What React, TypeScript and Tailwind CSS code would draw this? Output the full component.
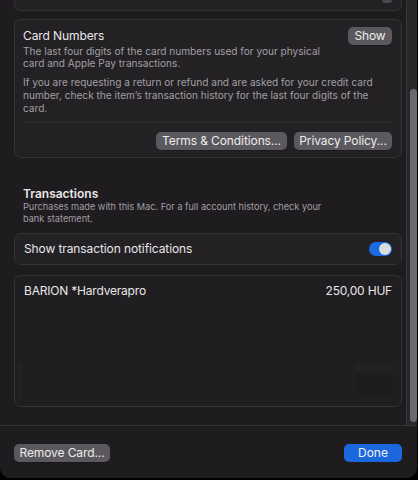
import React from "react";

const font = { fontFamily: "Inter, 'Noto Sans', 'Liberation Sans', sans-serif" };

function GrayButton({ children, className = "" }: { children: React.ReactNode; className?: string }) {
  return (
    <div
      className={
        "h-[18px] rounded-[5px] bg-[#5b595d] text-[#ececec] text-[12px] tracking-[-0.1px] leading-[18px] flex items-center justify-center whitespace-nowrap shadow-[0_0.5px_0_rgba(0,0,0,0.4)] " +
        className
      }
    >
      {children}
    </div>
  );
}

export default function App() {
  return (
    <div className="w-[418px] h-[480px] bg-black overflow-hidden" style={font}>
      <div className="w-[417px] h-[478px] bg-[#1f1c20] rounded-b-[10px] flex flex-col overflow-hidden">
        {/* scroll area */}
        <div className="h-[425px] flex flex-row">
          <div className="w-[406px] flex flex-col">
            {/* top card sliver */}
            <div className="ml-[14px] w-[388px] h-[11px] rounded-b-[7px] border border-t-0 border-[#353236] bg-[#242125] relative">
              <div className="absolute right-[9px] top-0 w-[10px] h-[3px] rounded-b-[3px] bg-[#4a484c]" />
            </div>
            {/* Card numbers card */}
            <div className="ml-[14px] mt-[8px] w-[388px] rounded-[7px] border border-[#353236] bg-[#242125] px-[8px] pt-[8px] pb-[7px]">
              <div className="flex flex-row justify-between">
                <div className="flex flex-col">
                  <div className="text-[12px] leading-[16px] text-[#e8e6e9] tracking-[-0.1px]">Card Numbers</div>
                  <div className="mt-[1px] text-[10.1px] leading-[12px] text-[#a19fa3] whitespace-nowrap">
                    The last four digits of the card numbers used for your physical
                    <br />
                    card and Apple Pay transactions.
                  </div>
                </div>
                <GrayButton className="w-[44px] -mt-[1px] mr-[1px]">Show</GrayButton>
              </div>
              <div className="mt-[7px] text-[10.1px] leading-[13px] text-[#a19fa3] whitespace-nowrap">
                If you are requesting a return or refund and are asked for your credit card
                <br />
                number, check the item’s transaction history for the last four digits of the
                <br />
                card.
              </div>
              <div className="mt-[7px] h-px bg-[#2f2c30]" />
              <div className="mt-[9px] flex flex-row justify-end gap-[7px] pr-[1px]">
                <GrayButton className="w-[131px]">Terms &amp; Conditions...</GrayButton>
                <GrayButton className="w-[98px]">Privacy Policy...</GrayButton>
              </div>
            </div>
            {/* Transactions heading */}
            <div className="ml-[23px] mt-[29px] flex flex-col">
              <div className="text-[12px] leading-[14px] font-semibold text-[#e8e6e9]">Transactions</div>
              <div className="text-[9.2px] leading-[12px] text-[#a19fa3] whitespace-nowrap">
                Purchases made with this Mac. For a full account history, check your
                <br />
                bank statement.
              </div>
            </div>
            {/* toggle card */}
            <div className="ml-[14px] mt-[8px] w-[388px] h-[32px] rounded-[7px] border border-[#353236] bg-[#242125] px-[9px] flex flex-row items-center justify-between">
              <div className="text-[12px] text-[#e8e6e9] tracking-[-0.1px]">Show transaction notifications</div>
              <div className="w-[23px] h-[14px] rounded-full bg-[#1b6be0] relative">
                <div className="absolute right-[1px] top-[1px] w-[12px] h-[12px] rounded-full bg-[#dcdcdc]" />
              </div>
            </div>
            {/* list card */}
            <div className="ml-[14px] mt-[10px] w-[388px] h-[132px] rounded-[7px] border border-[#353236] bg-[#211e22] relative">
              <div className="px-[9px] pt-[7px] flex flex-row justify-between text-[12px] leading-[16px] text-[#e8e6e9] tracking-[-0.2px]">
                <span>BARION *Hardverapro</span>
                <span>250,00 HUF</span>
              </div>
              <div className="absolute left-[3px] top-[87px] w-[5px] h-[36px] bg-[#242125]" />
              <div className="absolute left-[340px] top-[87px] w-[39px] h-[10px] bg-[#242125]" />
              <div className="absolute left-[340px] top-[97px] w-[39px] h-[24px] bg-[#1f1c20]" />
            </div>
          </div>
          {/* scrollbar */}
          <div className="w-[11px] h-full bg-[#2a272b] border-l border-[#3a373b] relative">
            <div className="absolute left-[3px] top-[89px] w-[7px] h-[333px] rounded-full bg-[#6c6a6e]" />
          </div>
        </div>
        <div className="h-px bg-[#363337]" />
        {/* footer */}
        <div className="flex flex-row justify-between pl-[14px] pr-[15px] pt-[18px]">
          <GrayButton className="w-[96px]">Remove Card...</GrayButton>
          <div className="w-[58px] h-[18px] rounded-[5px] bg-[#1b68de] text-[#f2f2f2] text-[12px] flex items-center justify-center">
            Done
          </div>
        </div>
      </div>
    </div>
  );
}
